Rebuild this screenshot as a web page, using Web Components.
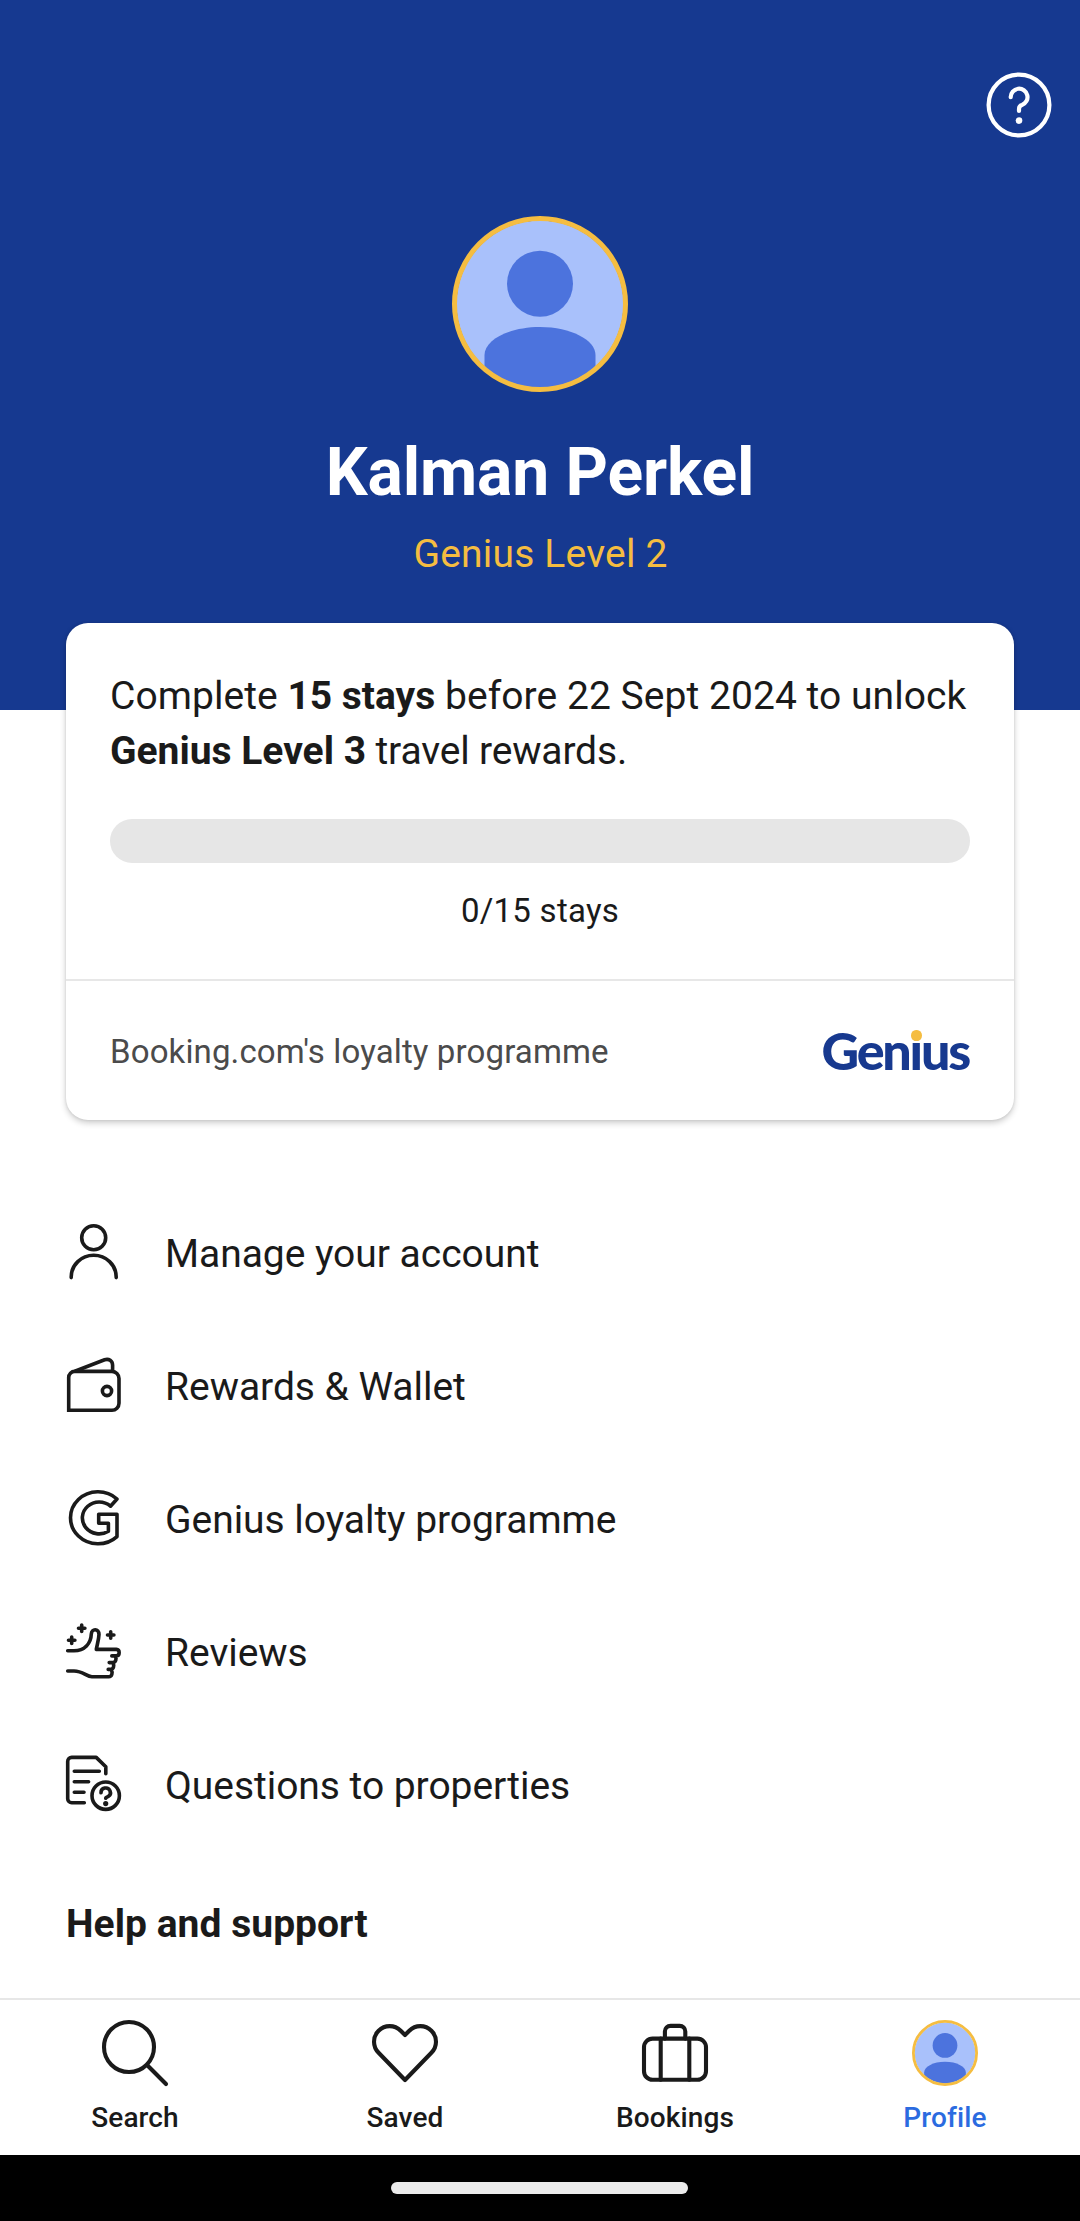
<!DOCTYPE html>
<html lang="en">
<head>
<meta charset="utf-8">
<title>Profile</title>
<style>
  html, body { margin: 0; background: #fff; }
  body { font-family: Roboto, "Liberation Sans", sans-serif; color: #1a1a1a; }
</style>
</head>
<body>
<profile-page></profile-page>

<script>
const stroke = (w, extra = '') =>
  `fill="none" stroke="currentColor" stroke-width="${w}" stroke-linecap="round" stroke-linejoin="round" ${extra}`;

const ICONS = {
  help: { box: 66, body: `<g ${stroke(4.2)}><circle cx="33" cy="33" r="30.4"/>
    <path d="M24.7 25.2a8.4 8.4 0 1 1 11.2 7.8 4.1 4.1 0 0 0-2.9 3.9v2"/></g>
    <circle cx="33" cy="48.6" r="3.3" fill="currentColor"/>` },
  account: { box: 56, body: `<g ${stroke(3.6)}><circle cx="27.7" cy="13.7" r="12"/>
    <path d="M5.2 53.6V53a22.5 21.7 0 0 1 45 0v.6"/></g>` },
  wallet: { box: 56, body: `<g ${stroke(3.6, 'style="stroke-linejoin:miter"')}>
    <path d="M8.7 14.4H46a7 7 0 0 1 7 7V46.3a7 7 0 0 1-7 7H2.7V20.4a6 6 0 0 1 6-6Z"/>
    <path d="M9.5 14 38.6 2.8C43 1.3 46.4 4 46.6 8V14"/>
    <circle cx="41" cy="34" r="4.6"/></g>` },
  genius: { box: 56, body: `<path ${stroke(3.6)} d="M51 9A27.5 26 0 1 0 51 46.6V24.3H32.7V33.2H42.4V41.2A16.8 15.9 0 1 1 44.5 16.2Z"/>` },
  reviews: { box: 56, body: `<g ${stroke(3.6)}>
    <path d="M2.5 17.3H8.9M5.7 14.1V20.5M12.5 5.3H18.9M15.7 2.1V8.5M41.5 12H47.9M44.7 8.8V15.2"/>
    <path d="M1.7 27.8H8C18.5 27.8 25 20.5 25.3 11 25.6 5.2 33 5.4 33 11.4 32.8 16.6 31.2 21.3 30.3 26.4H50.4C54.2 26.6 54 32.7 50.4 32.9H45.8M49.3 33C50.8 35.6 49.8 39.4 47 39.6H43.2M47 39.8C48.4 42.6 47.6 46.2 45 46.4H42.2M45.2 46.6C47 49.6 46 53.8 42.8 53.8H26C20.5 53.8 17 48 8 48H1.7"/></g>` },
  questions: { box: 56, body: `<g ${stroke(3.6)}>
    <path d="M18.3 46.7H5.7a4 4 0 0 1-4-4V5.4a4 4 0 0 1 4-4H30.2L39.8 10.8V17.8M8.3 15.3H33.3M8.3 25.8H22.6M8.3 36.2H18"/>
    <circle cx="39.7" cy="39.7" r="13.7"/>
    <path d="M35 36.8a4.7 4.6 0 1 1 7.2 3.7c-1.4.9-2.4 1-2.5 1.8"/></g>
    <circle cx="39.7" cy="47.6" r="2.6" fill="currentColor"/>` },
  search: { box: 66, body: `<g ${stroke(4.1)}><circle cx="27" cy="27" r="25"/><path d="M45.3 45.3 64 64"/></g>` },
  heart: { box: 66, body: `<path ${stroke(4.1)} d="M33 60 6.6 32.8A15.6 15.6 0 0 1 28.7 10.7L33 15 37.3 10.7A15.6 15.6 0 0 1 59.4 32.8Z"/>` },
  bookings: { box: 66, body: `<g ${stroke(4.1)}><rect x="2" y="18.6" width="62" height="41.2" rx="8.6"/>
    <path d="M18.7 18.6V59.8M47.3 18.6V59.8M22.9 18.6V11.5A5.6 5.6 0 0 1 28.5 5.9H37.7A5.6 5.6 0 0 1 43.3 11.5V18.6"/></g>` },
};

const define = (name, render) => customElements.define(name, class extends HTMLElement {
  constructor() { super(); this.attachShadow({ mode: 'open' }); }
  connectedCallback() { this.shadowRoot.innerHTML = render(this); }
});

define('ui-icon', el => {
  const { box, body } = ICONS[el.getAttribute('name')];
  return `<style>:host{display:block;flex:none;width:${box}px;height:${box}px}svg{display:block;overflow:visible}</style>
    <svg width="${box}" height="${box}" viewBox="0 0 ${box} ${box}" aria-hidden="true">${body}</svg>`;
});

define('user-avatar', el => {
  const size = +el.getAttribute('size'), ring = +el.getAttribute('ring') * 176 / size, r = 88 - ring;
  const id = 'disc' + size;
  return `<style>:host{display:block;flex:none;width:${size}px;height:${size}px}svg{display:block}</style>
    <svg width="${size}" height="${size}" viewBox="0 0 176 176" aria-hidden="true">
      <clipPath id="${id}"><circle cx="88" cy="88" r="${r + .5}"/></clipPath>
      <g clip-path="url(#${id})"><rect width="176" height="176" fill="#a9c1fb"/>
        <circle cx="88" cy="67.7" r="33" fill="#4c73dd"/>
        <path d="M32.5 176V139C32.5 124 57 111 88 111S143.5 124 143.5 139V176Z" fill="#4c73dd"/></g>
      <circle cx="88" cy="88" r="${88 - ring / 2}" fill="none" stroke="#f5bd41" stroke-width="${ring}"/>
    </svg>`;
});

define('profile-header', () => `
  <style>
    :host{display:flex;flex-direction:column;align-items:center;box-sizing:border-box;height:710px;padding-top:72px;
      background:#163990;color:#fff}
    .bar{align-self:stretch;display:flex;justify-content:flex-end;padding-right:28px;margin-bottom:78px}
    h1{margin:36px 0 0;font-size:66px;line-height:90px;font-weight:700;letter-spacing:-.12px}
    p{margin:9px 0 0;padding-left:1px;font-size:39px;line-height:54px;letter-spacing:.2px;color:#f5bd41}
  </style>
  <div class="bar"><ui-icon name="help"></ui-icon></div>
  <user-avatar size="176" ring="5"></user-avatar>
  <h1><slot></slot></h1>
  <p><slot name="level"></slot></p>`);

define('genius-logo', () => `
  <style>
    :host{display:block;color:#17398f;font:900 52px/60px Lato,sans-serif;letter-spacing:-2.2px;margin:-2px 1px 0 0}
    .i{position:relative}
    .i::after{content:"";position:absolute;left:1.5px;top:11px;width:10.5px;height:11.5px;border-radius:50%;background:#f5bd41}
  </style><span>Gen</span><span class="i">i</span><span>us</span>`);

define('progress-card', () => `
  <style>
    :host{display:block;position:relative;box-sizing:border-box;height:497px;margin:-87px 66px 0;background:#fff;border-radius:22px;
      box-shadow:0 3px 6px rgba(0,0,0,.2),0 0 3px rgba(0,0,0,.1)}
    .main{box-sizing:border-box;height:358px;padding:46px 44px 0;border-bottom:2px solid #e7e7e7}
    .msg{margin:0;font-size:39px;line-height:55px;letter-spacing:.05px;white-space:nowrap}
    .track{height:44px;border-radius:22px;background:#e6e6e6;margin-top:39.5px}
    .count{margin:26.5px 0 0;text-align:center;font-size:33px;line-height:44px;letter-spacing:.26px}
    footer{display:flex;align-items:center;justify-content:space-between;height:139px;padding:0 44px;box-sizing:border-box}
    .note{font-size:33px;line-height:44px;letter-spacing:.13px;color:#4b4b4b;padding-top:3px}
  </style>
  <div class="main"><p class="msg"><slot></slot></p><div class="track"></div><p class="count"><slot name="count"></slot></p></div>
  <footer><div class="note"><slot name="note"></slot></div><genius-logo></genius-logo></footer>`);

define('menu-row', el => `
  <style>
    :host{display:flex;align-items:center;gap:43px;height:133px;font-size:39px;line-height:54px;letter-spacing:-.04px}
    span{padding-top:5px}
  </style><ui-icon name="${el.getAttribute('icon')}"></ui-icon><span><slot></slot></span>`);

define('nav-tab', el => `
  <style>
    :host{flex:1;display:flex;flex-direction:column;align-items:center;gap:14px;font-size:28px;line-height:36px;font-weight:500;letter-spacing:.12px}
    :host([active]) span{color:#2b6be0}
  </style>${el.hasAttribute('active') ? '<user-avatar size="66" ring="2.8"></user-avatar>' : `<ui-icon name="${el.getAttribute('icon')}"></ui-icon>`}
  <span><slot></slot></span>`);

define('tab-bar', () => `
  <style>:host{display:flex;box-sizing:border-box;height:157px;padding-top:20px;border-top:2px solid #e7e7e7;background:#fff}</style>
  <slot></slot>`);

define('system-bar', () => `
  <style>
    :host{display:flex;justify-content:center;box-sizing:border-box;height:66px;padding:27px 1px 0 0;background:#000}
    div{width:297px;height:12px;border-radius:6px;background:#ebebeb}
  </style><div></div>`);

define('profile-page', () => `
  <style>
    :host{display:flex;flex-direction:column;width:1080px;height:2221px;overflow:hidden}
    main{flex:1;min-height:0}
    nav{padding:65px 66px 0}
    h2{margin:47px 66px 0;font-size:39px;line-height:54px;font-weight:700;letter-spacing:.03px}
    b{font-weight:700;letter-spacing:-.02px}
    .tight{letter-spacing:-.16px}
  </style>
  <main>
    <profile-header>Kalman Perkel<span slot="level">Genius Level 2</span></profile-header>
    <progress-card>Complete <b>15 stays</b> before 22 Sept 2024 to unlock<br><b>Genius Level 3</b><span class="tight"> travel rewards.</span>
      <span slot="count">0/15 stays</span><span slot="note">Booking.com's loyalty programme</span></progress-card>
    <nav>
      <menu-row icon="account">Manage your account</menu-row>
      <menu-row icon="wallet">Rewards &amp; Wallet</menu-row>
      <menu-row icon="genius">Genius loyalty programme</menu-row>
      <menu-row icon="reviews">Reviews</menu-row>
      <menu-row icon="questions">Questions to properties</menu-row>
    </nav>
    <h2>Help and support</h2>
  </main>
  <tab-bar>
    <nav-tab icon="search">Search</nav-tab>
    <nav-tab icon="heart">Saved</nav-tab>
    <nav-tab icon="bookings">Bookings</nav-tab>
    <nav-tab active>Profile</nav-tab>
  </tab-bar>
  <system-bar></system-bar>`);
</script>
</body>
</html>
